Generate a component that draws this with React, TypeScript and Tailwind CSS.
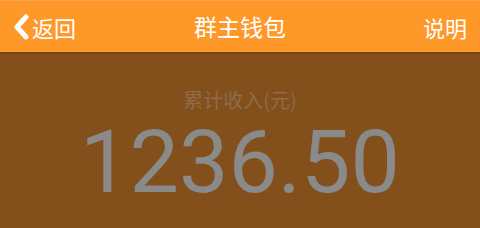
const font = { fontFamily: '"Noto Sans CJK SC", "Noto Sans", sans-serif' };

const App = () => {
  return (
    <div className="w-[480px] h-[228px] flex flex-col bg-[#834f1a]" style={font}>
      <div className="h-[52px] shrink-0 flex items-center justify-between bg-[#fd9829] border-t border-[#fca650] text-white">
        <div className="flex items-center pl-[11px] w-[120px]">
          <svg width="20" height="26" viewBox="0 0 20 26" className="mr-[1px]">
            <path d="M15 3 L6 13 L15 23" fill="none" stroke="white" strokeWidth="5" strokeLinecap="round" strokeLinejoin="round" />
          </svg>
          <span className="text-[22px] leading-none">返回</span>
        </div>
        <span className="text-[23px] leading-none">群主钱包</span>
        <div className="w-[120px] flex justify-end pr-[13px]">
          <span className="text-[22px] leading-none">说明</span>
        </div>
      </div>
      <div className="h-[2px] bg-[#74461a]" />
      <div className="flex-1 flex flex-col items-center">
        <span className="mt-[36px] text-[20px] leading-none text-[#8e6c4a]">累计收入(元)</span>
        <span
          className="mt-[8px] text-[88px] leading-none text-[#8a8a8a]"
          style={{ fontFamily: 'Roboto, sans-serif' }}
        >
          1236.50
        </span>
      </div>
    </div>
  );
};

export default App;
